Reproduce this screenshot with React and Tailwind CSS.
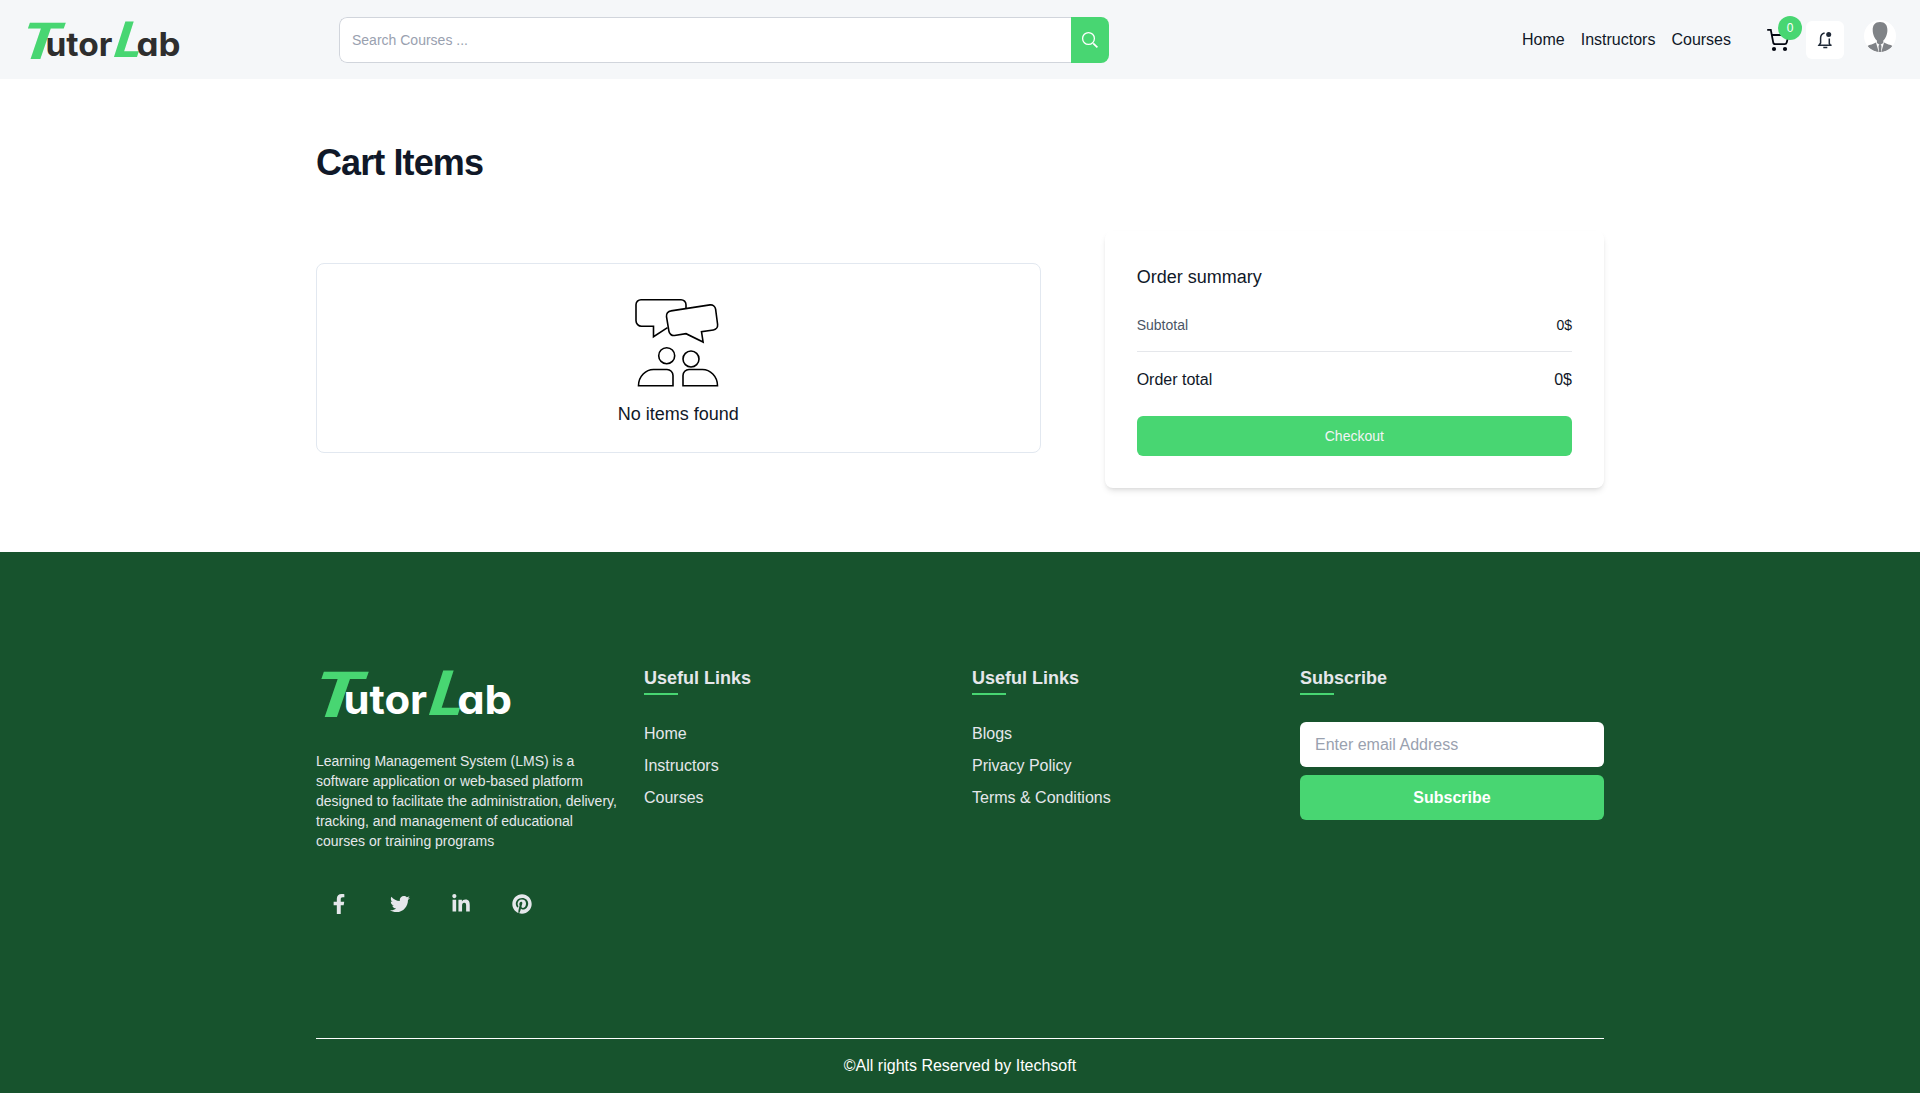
import React from "react";
import { FaFacebookF, FaTwitter, FaLinkedinIn, FaPinterest } from "react-icons/fa";

function Logo({ className, letters }) {
  return (
    <svg viewBox="0 0 154 40" className={className} role="img" aria-label="TutorLab" overflow="visible">
      <g fill="#48d672" fontFamily="Lato, sans-serif" fontStyle="italic" fontWeight="900">
        <text transform="translate(-1 38.5) skewX(-10)" fontSize="50" textLength="38" lengthAdjust="spacingAndGlyphs" x="-7" y="0">T</text>
        <text transform="translate(88 37) skewX(-10)" fontSize="49" textLength="28" lengthAdjust="spacingAndGlyphs" x="-3" y="0">L</text>
      </g>
      <g fill={letters} fontFamily="Inter, sans-serif" fontWeight="700" style={{ fontFeatureSettings: '"cv11"' }}>
        <text x="18.500" y="36" fontSize="32" textLength="67" lengthAdjust="spacingAndGlyphs">utor</text>
        <text x="109.500" y="36" fontSize="32" textLength="44" lengthAdjust="spacingAndGlyphs">ab</text>
      </g>
    </svg>
  );
}

function SearchIcon() {
  return (
    <svg width="18" height="18" viewBox="0 0 18 18" fill="none" stroke="white">
      <circle cx="7.5" cy="7.5" r="5.9" strokeWidth="1.3" />
      <path d="M12.2 12.3 L16.4 16.4" strokeWidth="1.7" />
    </svg>
  );
}

function CartIcon() {
  return (
    <svg width="28" height="28" viewBox="0 0 28 28" fill="none" stroke="#030712" strokeWidth="1.8">
      <path d="M3.200 3.800H6.800L9.200 16.300a2.200 2.200 0 0 0 2.200 1.900h9.200a2.200 2.200 0 0 0 2.100-1.700L24.600 9H7.800" />
      <circle cx="10" cy="23" r="2.100" fill="#030712" stroke="none" />
      <circle cx="21" cy="23" r="2.100" fill="#030712" stroke="none" />
    </svg>
  );
}

function BellIcon() {
  return (
    <svg width="16" height="18" viewBox="0 0 16 18" fill="none" stroke="#1f2937" strokeWidth="1.5">
      <path d="M7.600 1.900C5 2.500 3.600 4.500 3.600 7v5L2 14.300h12.600M12.300 7.500v5l1.200 1.800" />
      <path d="M6.300 16.500h4" strokeWidth="1.500" />
      <circle cx="11.700" cy="3.500" r="2.500" fill="#1f2937" stroke="none" />
    </svg>
  );
}

function Avatar() {
  return (
    <svg width="32" height="32" viewBox="0 0 32 32" className="rounded-full bg-white">
      <path d="M16 2c-5 0-7.300 3-7.300 8 0 4.500 2 8.700 4.200 10.600v2.500L16 25l3.300-1.900v-2.500c2.200-1.900 4.100-6.100 4.100-10.600 0-5-2.400-8-7.400-8z" fill="#808387" />
      <path d="M12 22.500 14.700 32C10 32 5.500 29.500 3.500 26c2-1.400 6-1.700 8.500-3.500zM20 22.500 17.300 32c4.700 0 9.200-2.500 11.200-6-2-1.400-6-1.700-8.500-3.500zM15 24.500h2l.5 2-.5 5.500h-2l-.5-5.500z" fill="#808387" />
    </svg>
  );
}

function EmptyIcon() {
  return (
    <svg width="84" height="90" viewBox="0 0 84 90" fill="none" stroke="black" strokeWidth="1.6" strokeLinejoin="miter">
      <g transform="translate(0 0.7)">
        <path d="M51 11V7a5 5 0 0 0-5-5H6a5 5 0 0 0-5 5v16a5.500 5.500 0 0 0 5.500 5.500H18.500V39L32.500 30" />
        <path d="M36 13.200 75 7.200a5 5 0 0 1 5.600 4.200l2 15.400a5 5 0 0 1-4.200 5.500L66.500 34l1.600 10.300L51 36l-11.500 1.800a5 5 0 0 1-5.600-4.300L31.500 19a5 5 0 0 1 4.500-5.800z" />
      </g>
      <circle cx="31.700" cy="58.700" r="8" />
      <circle cx="56" cy="62" r="8" />
      <path d="M3.500 88.800C3.500 79 11 72.500 18.500 72.500H32a6 6 0 0 1 6 6v10.300zM82.500 88.800C82.500 79 75 72.500 67.500 72.500H54a6 6 0 0 0-6 6v10.300z" />
    </svg>
  );
}

function Heading({ children }) {
  return (
    <div className="flex flex-col gap-px">
      <h3 className="text-lg leading-7 font-bold">{children}</h3>
      <span className="h-0.5 w-[34px] bg-[#48d672]" />
    </div>
  );
}

function LinkColumn({ items }) {
  return (
    <div className="pt-28">
      <Heading>Useful Links</Heading>
      <ul className="mt-[27px] flex flex-col gap-2">
        {items.map((item) => (
          <li key={item}><a href="#" className="leading-6">{item}</a></li>
        ))}
      </ul>
    </div>
  );
}

export default function App() {
  return (
    <div className="flex min-h-[1093px] flex-col bg-white font-['Liberation_Sans',sans-serif] text-gray-900">
      <header className="flex h-[79px] items-center bg-[#f5f7f9] pl-[27px] pr-6">
        <Logo className="h-10 w-[154px]" letters="#2e2e2e" />
        <div className="ml-[158px] flex h-[46px] w-[770px] overflow-hidden rounded-lg">
          <input
            placeholder="Search Courses ..."
            className="min-w-0 flex-1 rounded-l-lg border border-r-0 border-gray-300 bg-white px-3 text-sm placeholder:text-gray-400"
          />
          <button className="flex w-[38px] items-center justify-center bg-[#48d672]"><SearchIcon /></button>
        </div>
        <nav className="ml-auto flex gap-4 leading-6">
          <a href="#">Home</a>
          <a href="#">Instructors</a>
          <a href="#">Courses</a>
        </nav>
        <a href="#" className="relative ml-[33px] block size-7">
          <CartIcon />
          <span className="absolute -top-2.5 left-3.5 flex size-6 items-center justify-center rounded-full bg-[#48d672] text-xs text-white">0</span>
        </a>
        <button className="ml-3.5 flex size-[38px] items-center justify-center rounded-md bg-white"><BellIcon /></button>
        <div className="mb-[7px] ml-5"><Avatar /></div>
      </header>

      <main className="mx-auto w-[1288px] py-16">
        <h1 className="text-4xl leading-10 font-bold tracking-tight">Cart Items</h1>
        <div className="mt-12 grid grid-cols-12 items-start gap-x-16">
          <section className="col-span-7 mt-8 flex h-[190px] flex-col items-center rounded-lg border border-slate-200 pt-[33px]">
            <div className="mr-0.5"><EmptyIcon /></div>
            <p className="mt-[13px] text-lg leading-7">No items found</p>
          </section>
          <section className="col-span-5 rounded-lg p-8 shadow-md">
            <h2 className="text-lg leading-7">Order summary</h2>
            <div className="mt-6 flex justify-between text-sm leading-5">
              <span className="text-gray-600">Subtotal</span>
              <span>0$</span>
            </div>
            <div className="mt-4 flex justify-between border-t border-gray-200 pt-4 leading-6">
              <span>Order total</span>
              <span>0$</span>
            </div>
            <button className="mt-6 h-10 w-full rounded-md bg-[#48d672] text-sm text-gray-100">Checkout</button>
          </section>
        </div>
      </main>

      <footer className="flex-1 bg-[#17532d] text-gray-200">
        <div className="mx-auto flex w-[1288px] flex-col">
          <div className="grid h-[486px] grid-cols-4 gap-6">
            <div className="pt-[117px]">
              <Logo className="ml-1 h-[50px] w-[193px]" letters="#ffffff" />
              <p className="mt-8 text-sm leading-5">
                Learning Management System (LMS) is a software application or web-based platform designed to facilitate the administration, delivery, tracking, and management of educational courses or training programs
              </p>
              <div className="mt-[43px] ml-[13px] flex gap-[41px]">
                <FaFacebookF size={20} />
                <FaTwitter size={20} />
                <FaLinkedinIn size={20} />
                <FaPinterest size={20} />
              </div>
            </div>
            <LinkColumn items={["Home", "Instructors", "Courses"]} />
            <LinkColumn items={["Blogs", "Privacy Policy", "Terms & Conditions"]} />
            <div className="pt-28">
              <Heading>Subscribe</Heading>
              <div className="mt-[27px] flex flex-col gap-2">
                <input placeholder="Enter email Address" className="h-[45px] rounded-md bg-white px-[15px] placeholder:text-gray-400" />
                <button className="h-[45px] rounded-md bg-[#48d672] font-bold text-white">Subscribe</button>
              </div>
            </div>
          </div>
          <p className="border-t border-white pt-[15px] text-center leading-6 text-white">©All rights Reserved by Itechsoft</p>
        </div>
      </footer>
    </div>
  );
}
